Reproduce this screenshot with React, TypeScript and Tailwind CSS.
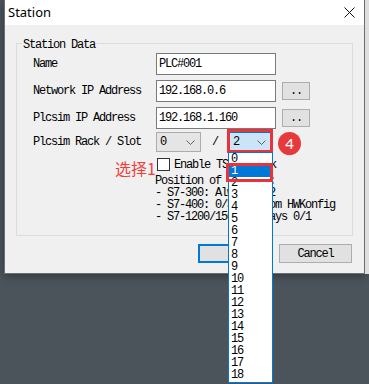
import React from "react";

const mono = "font-['Liberation_Mono',monospace] text-[12px] tracking-[-1.2px] text-black";

function Chevron() {
  return (
    <svg width="9" height="5" viewBox="0 0 9 5" className="shrink-0">
      <path d="M0.5 0.5 L4.5 4.5 L8.5 0.5" fill="none" stroke="#606060" strokeWidth="1" />
    </svg>
  );
}

function Row({ label, value, button }: { label: string; value: string; button?: boolean }) {
  return (
    <div className="flex items-center h-[22px]">
      <div className={`w-[123px] ${mono}`}>{label}</div>
      <div className={`w-[120px] h-[22px] border border-[#7a7a7a] bg-white flex items-center pl-[2px] ${mono}`}>{value}</div>
      {button && (
        <div className={`ml-[6px] w-[28px] h-[18px] border border-[#adadad] bg-[#e1e1e1] flex items-center justify-center ${mono}`}>..</div>
      )}
    </div>
  );
}

export default function App() {
  const items = Array.from({ length: 19 }, (_, i) => i);
  return (
    <div className="relative w-[369px] h-[384px] overflow-hidden bg-[#4b535b]">
      <div className="flex">
        <div className="w-[4px]" />
        <div className="w-[361px] h-[274px] flex flex-col border-x border-b border-[#6b6f74] shadow-[0_2px_8px_rgba(0,0,0,0.35)]">
          <div className="h-[25px] bg-white flex items-center justify-between pl-[3px] pr-[9px]">
            <span className="font-['Noto_Sans',sans-serif] text-[13px] text-black">Station</span>
            <svg width="11" height="11" viewBox="0 0 11 11">
              <path d="M0.5 0.5 L10.5 10.5 M10.5 0.5 L0.5 10.5" stroke="#111" strokeWidth="1" />
            </svg>
          </div>
          <div className="flex-1 bg-[#f0f0f0] flex flex-col pb-[10px]">
            <div className="relative mt-[18px] ml-[11px] w-[337px] h-[193px] border border-[#dcdcdc]">
              <span className={`absolute -top-[8px] left-[5px] px-[1px] bg-[#f0f0f0] ${mono}`}>Station Data</span>
              <div className="flex flex-col pl-[16px] pt-[9px]">
                <div className="flex flex-col gap-[5px]">
                  <Row label="Name" value="PLC#001" />
                  <Row label="Network IP Address" value="192.168.0.6" button />
                  <Row label="Plcsim IP Address" value="192.168.1.160" button />
                </div>
                <div className="flex items-center h-[20px] mt-[3px]">
                  <div className={`w-[123px] ${mono}`}>Plcsim Rack / Slot</div>
                  <div className={`w-[45px] h-[20px] border border-[#acacac] bg-[#e5e5e5] flex items-center justify-between pl-[3px] pr-[5px] ${mono}`}>
                    <span>0</span>
                    <Chevron />
                  </div>
                  <div className={`w-[28px] text-center ${mono}`}>/</div>
                  <div className={`w-[43px] h-[20px] border border-[#0078d7] bg-[#cce4f7] flex items-center justify-between pl-[3px] pr-[5px] ${mono}`}>
                    <span>2</span>
                    <Chevron />
                  </div>
                </div>
                <div className="flex items-center mt-[6px] pl-[124px] h-[13px]">
                  <div className="w-[13px] h-[13px] border border-[#333] bg-white" />
                  <span className={`ml-[4px] ${mono}`}>Enable TSAP check</span>
                </div>
                <div className={`mt-[4px] pl-[122px] flex flex-col leading-[12px] whitespace-pre ${mono}`}>
                  <span>Position of the CPU:</span>
                  <span>- S7-300: Always 0/2</span>
                  <span>- S7-400: 0/Slot from HWKonfig</span>
                  <span>- S7-1200/1500: Always 0/1</span>
                </div>
              </div>
            </div>
            <div className="flex justify-end gap-[7px] pr-[12px] mt-[8px]">
              <div className={`w-[74px] h-[19px] border-2 border-[#0078d7] bg-[#e1e1e1] flex items-center justify-center ${mono}`}>OK</div>
              <div className={`w-[73px] h-[19px] border border-[#adadad] bg-[#e1e1e1] flex items-center justify-center ${mono}`}>Cancel</div>
            </div>
          </div>
        </div>
        <div className="w-[4px] h-[274px] bg-[#dedede]" />
      </div>

      {/* annotations / overlays */}
      <div className="absolute left-[115px] top-[157px] font-['Noto_Sans_CJK_SC',sans-serif] text-[16px] leading-[22px] text-[#f23d3d]">选择1</div>
      <div className="absolute left-[227px] top-[129px] w-[46px] h-[24px] border-[3px] border-[#e8333a]" />
      <div className="absolute left-[278px] top-[132px] w-[23px] h-[23px] rounded-full bg-[#e8393a] flex items-center justify-center font-['Noto_Sans',sans-serif] text-[15px] text-white">4</div>
      <div className="absolute left-[228px] top-[152px] w-[45px] h-[231px] border border-[#0078d7] bg-white flex flex-col">
        {items.map((i) => (
          <div
            key={i}
            className={`h-[12px] leading-[12px] pl-[2px] ${mono} ${i === 1 ? "bg-[#0078d7] text-white" : ""}`}
          >
            {i}
          </div>
        ))}
      </div>
      <div className="absolute left-[226px] top-[163px] w-[47px] h-[19px] border-[3px] border-[#e8333a]" />
    </div>
  );
}
